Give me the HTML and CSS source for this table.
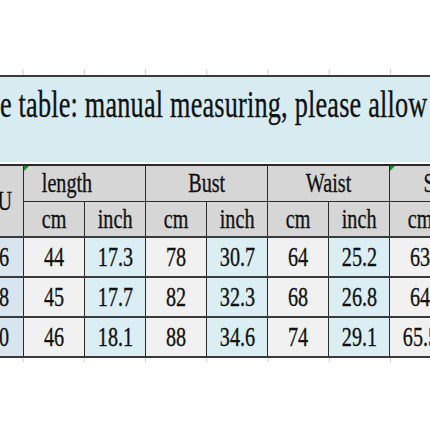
FILE: index.html
```html
<!DOCTYPE html>
<html>
<head>
<meta charset="utf-8">
<link rel="stylesheet" href="styles.css">
</head>
<body>
<div class="page">
  <div class="top"><div class="ticks"></div></div>
  <div class="band"><span class="title">e table: manual measuring, please allow</span></div>
  <table class="size">
    <colgroup>
      <col class="c-size"><col><col><col><col><col><col><col><col>
    </colgroup>
    <tr class="h1">
      <th rowspan="2" class="sz"><span class="t">EU</span></th>
      <th colspan="2" class="flag shift"><span class="t">length</span></th>
      <th colspan="2"><span class="t">Bust</span></th>
      <th colspan="2"><span class="t">Waist</span></th>
      <th colspan="2" class="flag"><span class="t">Sleeve</span></th>
    </tr>
    <tr class="h2">
      <th><span class="t">cm</span></th><th><span class="t">inch</span></th>
      <th><span class="t">cm</span></th><th><span class="t">inch</span></th>
      <th><span class="t">cm</span></th><th><span class="t">inch</span></th>
      <th><span class="t">cm</span></th><th><span class="t">inch</span></th>
    </tr>
    <tr>
      <td class="sz"><span class="t">36</span></td>
      <td class="cm"><span class="t">44</span></td><td class="in"><span class="t">17.3</span></td>
      <td class="cm"><span class="t">78</span></td><td class="in"><span class="t">30.7</span></td>
      <td class="cm"><span class="t">64</span></td><td class="in"><span class="t">25.2</span></td>
      <td class="cm"><span class="t">63</span></td><td class="in"><span class="t">24.8</span></td>
    </tr>
    <tr>
      <td class="sz"><span class="t">38</span></td>
      <td class="cm"><span class="t">45</span></td><td class="in"><span class="t">17.7</span></td>
      <td class="cm"><span class="t">82</span></td><td class="in"><span class="t">32.3</span></td>
      <td class="cm"><span class="t">68</span></td><td class="in"><span class="t">26.8</span></td>
      <td class="cm"><span class="t">64</span></td><td class="in"><span class="t">25.2</span></td>
    </tr>
    <tr>
      <td class="sz"><span class="t">40</span></td>
      <td class="cm"><span class="t">46</span></td><td class="in"><span class="t">18.1</span></td>
      <td class="cm"><span class="t">88</span></td><td class="in"><span class="t">34.6</span></td>
      <td class="cm"><span class="t">74</span></td><td class="in"><span class="t">29.1</span></td>
      <td class="cm"><span class="t">65.5</span></td><td class="in"><span class="t">25.8</span></td>
    </tr>
  </table>
  <div class="bottom"><div class="ticks"></div></div>
</div>
</body>
</html>
```
FILE: styles.css
```css
html, body {
  margin: 0;
  padding: 0;
  background: #ffffff;
}
.page {
  width: 430px;
  height: 430px;
  overflow: hidden;
  font-family: "Liberation Serif", "Times New Roman", serif;
  color: #111;
  -webkit-text-stroke: 0.35px #111;
}
.top {
  height: 75px;
  display: flex;
  flex-direction: column;
  justify-content: flex-end;
}
.ticks {
  height: 6px;
  background-image: linear-gradient(90deg, #d0d0d0 0 1px, transparent 1px);
  background-size: 61.25px 100%;
  background-position: 22.5px 0;
  background-repeat: repeat-x;
}
.band {
  height: 87px;
  border-top: 2px solid #3a3a3a;
  background: #d6ecf1;
  white-space: nowrap;
  overflow: hidden;
  padding-top: 5px;
  box-sizing: border-box;
}
.title {
  display: inline-block;
  font-size: 38px;
  line-height: 44px;
  letter-spacing: 0.3px;
  transform: scaleX(0.69);
  transform-origin: 0 0;
}
.size {
  border-collapse: collapse;
  table-layout: fixed;
  margin-left: -27px;
  margin-top: 2px;
  width: 538px;
}
.size col { width: 61px; }
.size col.c-size { width: 50px; }
.size th, .size td {
  border: 1px solid #2a2a2a;
  padding: 0;
  text-align: center;
  font-weight: normal;
  font-size: 28px;
  line-height: 30px;
  white-space: nowrap;
  overflow: hidden;
  position: relative;
}
.size th.shift { padding-right: 35px; }
.size tr { height: 36px; }
.size tr.h1 th { border-top: 2px solid #2a2a2a; }
.size td { height: 38px; border-top: 2px solid #3a3a3a; }
.size tr:last-child td { border-bottom: 2px solid #3a3a3a; }
.size th { background: #d6d6d6; }
.size td.cm { background: #f1f1f1; }
.size td.in { background: #daeef3; }
.size .sz { background: #d8e5ef; }
.size th.sz { background: #d6d6d6; }
.t {
  display: inline-block;
  transform: scaleX(0.72);
}
.flag::before {
  content: "";
  position: absolute;
  left: 0;
  top: 0;
  border-top: 5px solid #1f8a3a;
  border-right: 5px solid transparent;
}
.bottom .ticks {
  height: 4px;
}
```
